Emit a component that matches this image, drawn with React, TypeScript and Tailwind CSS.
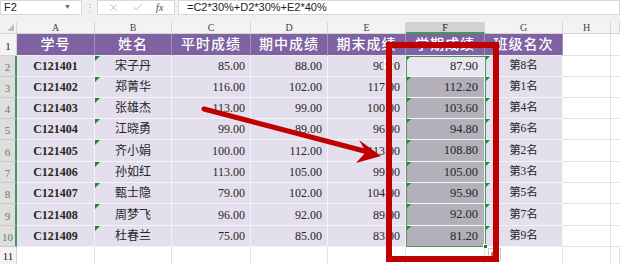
import { X, Check } from "lucide-react";

const serif = "font-['Liberation_Serif','Noto_Sans_CJK_SC',serif]";
const sans = "font-['Liberation_Sans','Noto_Sans_CJK_SC',sans-serif]";

const headers = ["学号", "姓名", "平时成绩", "期中成绩", "期末成绩", "学期成绩", "班级名次"];

const data = [
  ["C121401", "宋子丹", "85.00", "88.00", "90.00", "87.90", "第8名"],
  ["C121402", "郑菁华", "116.00", "102.00", "117.00", "112.20", "第1名"],
  ["C121403", "张雄杰", "113.00", "99.00", "100.00", "103.60", "第4名"],
  ["C121404", "江晓勇", "99.00", "89.00", "96.00", "94.80", "第6名"],
  ["C121405", "齐小娟", "100.00", "112.00", "113.00", "108.80", "第2名"],
  ["C121406", "孙如红", "113.00", "105.00", "99.00", "105.00", "第3名"],
  ["C121407", "甄士隐", "79.00", "102.00", "104.00", "95.90", "第5名"],
  ["C121408", "周梦飞", "96.00", "92.00", "89.00", "92.00", "第7名"],
  ["C121409", "杜春兰", "75.00", "85.00", "83.00", "81.20", "第9名"],
];

const letters = ["A", "B", "C", "D", "E", "F", "G", "H", ""];

const Flag = () => (
  <span className="absolute left-0 top-0 h-0 w-0 border-t-[5px] border-r-[5px] border-t-[#1d8a2a] border-r-transparent" />
);

const FormulaBar = () => (
  <div className={`flex h-[22px] items-start gap-0 bg-[#f1f1f1] ${sans}`}>
    <div className="flex h-[15px] w-[82px] items-center justify-between border border-[#d9d9d9] bg-white pl-[3px] pr-[10px] text-[11px] text-[#222]">
      <span>F2</span>
      <span className="text-[7px] text-[#666]">▼</span>
    </div>
    <div className="flex h-[15px] w-[15px] items-center justify-center text-[10px] text-[#aaa]">⋮</div>
    <div className="flex h-[15px] w-[78px] items-center justify-around border border-[#d9d9d9] bg-white px-1 text-[#9a9a9a]">
      <X size={11} strokeWidth={1.5} />
      <Check size={11} strokeWidth={1.5} />
      <span className={`${serif} text-[11px] italic text-[#555]`}>fx</span>
    </div>
    <div className="ml-[3px] flex h-[15px] flex-1 items-center border border-[#d9d9d9] bg-white pl-[8px] text-[11px] text-[#222]">
      =C2*30%+D2*30%+E2*40%
    </div>
  </div>
);

export default function App() {
  const rowCells: JSX.Element[] = [];

  // column header row
  rowCells.push(
    <div key="corner" className="relative border-r border-b border-[#d5d5d5] bg-[#f3f3f3]">
      <span className="absolute bottom-[2px] right-[2px] h-0 w-0 border-b-[7px] border-l-[7px] border-b-[#bdbdbd] border-l-transparent" />
    </div>
  );
  letters.forEach((l, i) => {
    const sel = l === "F";
    rowCells.push(
      <div
        key={"h" + i}
        className={`flex items-center justify-center border-r border-b border-[#d5d5d5] text-[10px] ${serif} ${
          sel ? "border-b-2 border-b-[#3f9b5a] bg-[#d2d2d2] text-[#222]" : "bg-[#f3f3f3] text-[#444]"
        }`}
      >
        {l}
      </div>
    );
  });

  // row 1 (titles)
  rowCells.push(
    <div key="r1" className={`flex items-end justify-center border-r border-b border-[#d5d5d5] bg-[#f3f3f3] pb-[1px] text-[11px] text-[#222] ${serif}`}>
      1
    </div>
  );
  headers.forEach((h, i) => {
    rowCells.push(
      <div
        key={"t" + i}
        className={`flex items-center justify-center border-r border-b border-r-[#a48fbd] border-b-[#efecf4] bg-[#7f62a2] text-[14px] font-medium tracking-[1px] text-white ${serif}`}
      >
        {h}
      </div>
    );
  });
  rowCells.push(<div key="t7" className="border-r border-b border-[#e2e2e2] bg-white" />);
  rowCells.push(<div key="t8" className="border-b border-[#e2e2e2] bg-white" />);

  data.forEach((row, r) => {
    rowCells.push(
      <div
        key={"n" + r}
        className={`flex items-end justify-center border-b border-r-2 border-b-[#c9c9c9] border-r-[#3f9b5a] bg-[#dedede] pb-[1px] text-[11px] text-[#5d7f66] ${serif}`}
      >
        {r + 2}
      </div>
    );
    row.forEach((v, c) => {
      const key = `c${r}-${c}`;
      const base = "relative flex items-center border-r border-b border-[#f5f3f8] text-[#262626]";
      if (c === 0) {
        rowCells.push(
          <div key={key} className={`${base} justify-center bg-[#e4dfec] text-[12px] font-bold ${serif}`}>
            {v}
          </div>
        );
      } else if (c === 1) {
        rowCells.push(
          <div key={key} className={`${base} justify-center bg-[#e4dfec] text-[12px] text-[#4a4a4a] ${serif}`}>
            <Flag />
            {v}
          </div>
        );
      } else if (c === 5) {
        rowCells.push(
          <div
            key={key}
            className={`${base} justify-end pr-[6px] text-[12.5px] text-[#1e1e1e] ${serif} ${
              r === 0 ? "bg-[#ebe7f1]" : "border-[#c9c6ce] bg-[#b4b0ba]"
            }`}
          >
            <Flag />
            {v}
          </div>
        );
      } else if (c === 6) {
        rowCells.push(
          <div key={key} className={`${base} justify-center bg-[#e4dfec] text-[11.5px] text-[#4a4a4a] ${serif}`}>
            <Flag />
            {v}
          </div>
        );
      } else {
        rowCells.push(
          <div key={key} className={`${base} justify-end bg-[#e4dfec] pr-[5px] text-[12px] ${serif}`}>
            {v}
          </div>
        );
      }
    });
    rowCells.push(<div key={"x" + r} className="border-r border-b border-[#e2e2e2] bg-white" />);
    rowCells.push(<div key={"y" + r} className="border-b border-[#e2e2e2] bg-white" />);
  });

  // row 11
  rowCells.push(
    <div key="r11" className={`flex items-end justify-center border-r border-[#d5d5d5] bg-[#f3f3f3] text-[11px] text-[#222] ${serif}`}>
      11
    </div>
  );
  for (let i = 0; i < 9; i++) {
    rowCells.push(<div key={"e" + i} className="border-r border-[#e2e2e2] bg-white" />);
  }

  return (
    <div className="relative h-[264px] w-[620px] overflow-hidden bg-white">
      <FormulaBar />
      <div className="grid grid-cols-[17px_78px_77px_79px_77px_78px_79px_78px_48px_1fr] grid-rows-[12px_22px_21px_21px_21px_21px_22px_21px_21px_22px_21px_17px]">
        {rowCells}
      </div>

      {/* selection outline F2:F10 */}
      <div className="pointer-events-none absolute left-[406px] top-[56px] h-[191px] w-[80px] border border-[#3f9b5a]" />
      <div className="absolute left-[483px] top-[244px] h-[5px] w-[5px] border border-white bg-[#217346]" />

      {/* smart tag in E2 */}
      <div className="absolute left-[383px] top-[58px] flex h-[12px] w-[11px] items-center justify-center border border-[#d8d8d8] bg-white">
        <span className="h-[6px] w-[6px] rotate-45 bg-[#f0a30a]" />
      </div>

      {/* autofill options */}
      <div className="absolute left-[488px] top-[248px] flex h-[13px] w-[13px] items-center justify-center border border-[#c8c8c8] bg-white">
        <span className="h-[6px] w-[7px] rounded-[1px] bg-[#e8743b]" />
      </div>

      {/* red highlight box */}
      <div className="absolute left-[386px] top-[42px] h-[220px] w-[113px] border-[6px] border-[#c00000]" />

      {/* red arrow */}
      <svg className="absolute left-0 top-0" width="620" height="264">
        <line x1="204" y1="109" x2="368" y2="152" stroke="#c00000" strokeWidth="5" strokeLinecap="round" />
        <polygon points="381,156 359,140 366,152 356,163" fill="#c00000" />
      </svg>
    </div>
  );
}
